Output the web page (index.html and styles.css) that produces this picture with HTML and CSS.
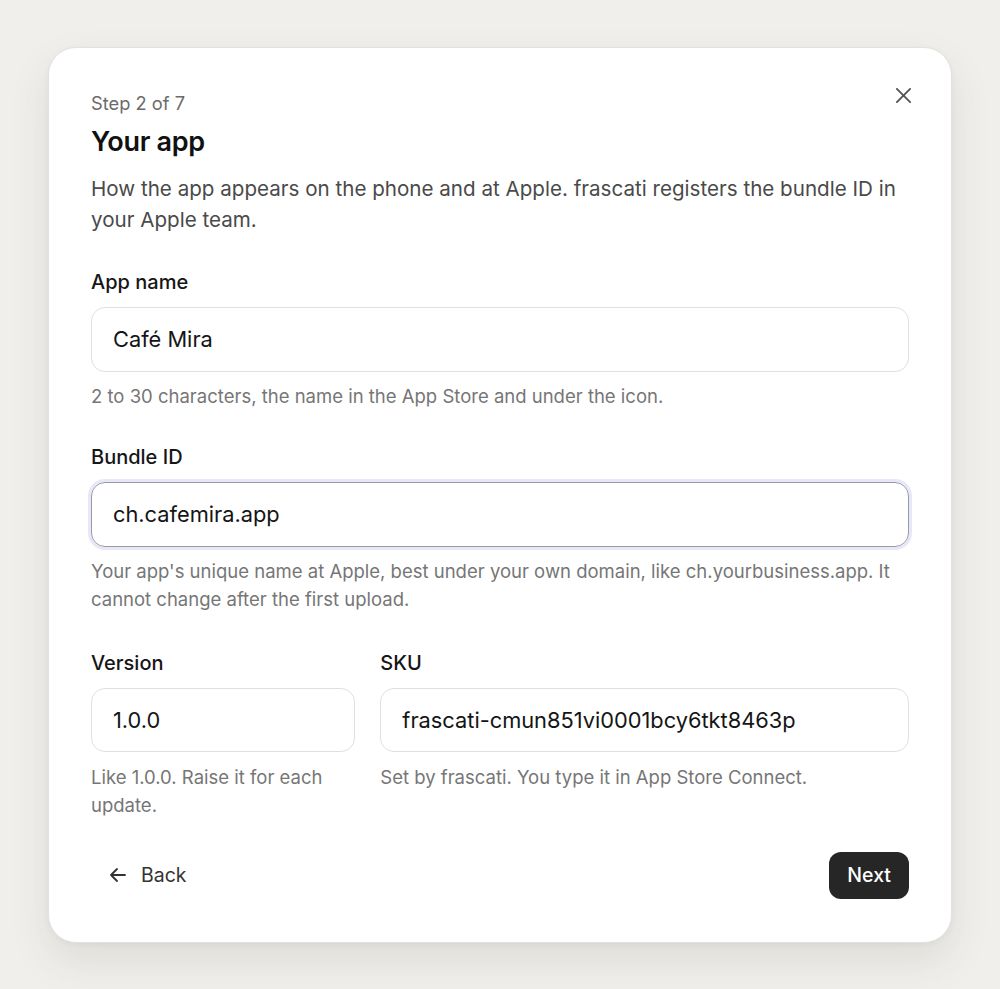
FILE: index.html
```html
<!DOCTYPE html>
<html lang="en">
<head>
<meta charset="utf-8">
<title>Your app</title>
<link rel="stylesheet" href="styles.css">
</head>
<body>
<div class="card">
  <button class="close" aria-label="Close">
    <svg width="18" height="18" viewBox="0 0 18 18" fill="none" stroke="#555" stroke-width="2" stroke-linecap="round"><path d="M2 2L16 16M16 2L2 16"/></svg>
  </button>
  <div class="step">Step 2 of 7</div>
  <h1 class="title">Your app</h1>
  <p class="desc">How the app appears on the phone and at Apple. frascati registers the bundle ID in your Apple team.</p>

  <div class="field">
    <label class="label">App name</label>
    <div class="input">Café Mira</div>
    <p class="hint">2 to 30 characters, the name in the App Store and under the icon.</p>
  </div>

  <div class="field">
    <label class="label">Bundle ID</label>
    <div class="input focused">ch.cafemira.app</div>
    <p class="hint">Your app's unique name at Apple, best under your own domain, like ch.yourbusiness.app. It cannot change after the first upload.</p>
  </div>

  <div class="row">
    <div class="field">
      <label class="label">Version</label>
      <div class="input">1.0.0</div>
      <p class="hint">Like 1.0.0. Raise it for each update.</p>
    </div>
    <div class="field">
      <label class="label">SKU</label>
      <div class="input">frascati-cmun851vi0001bcy6tkt8463p</div>
      <p class="hint">Set by frascati. You type it in App Store Connect.</p>
    </div>
  </div>

  <div class="actions">
    <button class="back">
      <svg width="18" height="16" viewBox="0 0 18 16" fill="none" stroke="#333" stroke-width="1.8" stroke-linecap="round" stroke-linejoin="round"><path d="M16 8H2M8 2L2 8l6 6"/></svg>
      <span>Back</span>
    </button>
    <button class="next">Next</button>
  </div>
</div>
</body>
</html>
```

FILE: styles.css
```css
* { box-sizing: border-box; }
html, body { margin: 0; padding: 0; }
body {
  background: #f0efec;
  font-family: "Inter", "Liberation Sans", sans-serif;
  min-height: 100vh;
  display: flex;
  align-items: center;
  justify-content: center;
  color: #111;
}
.card {
  position: relative;
  width: 904px;
  background: #fff;
  border: 1px solid #e2e1dd;
  border-radius: 28px;
  padding: 43px 42px 43px 42px;
  box-shadow: 0 18px 40px rgba(60, 55, 40, 0.10), 0 2px 6px rgba(0,0,0,0.04);
}
.close {
  position: absolute;
  top: 38px;
  right: 38px;
  width: 20px;
  height: 20px;
  padding: 0;
  border: none;
  background: none;
  display: flex;
  align-items: center;
  justify-content: center;
}
.close svg { width: 17px; height: 17px; }
.step {
  font-size: 18.3px;
  line-height: 24px;
  color: #6b6b6b;
}
.title {
  margin: 10px 0 0;
  font-size: 27px;
  line-height: 34px;
  font-weight: 600;
  letter-spacing: -0.3px;
  color: #111;
}
.desc {
  margin: 14px 0 0;
  font-size: 20.6px;
  line-height: 31px;
  color: #4a4a4a;
}
.field { margin-top: 34px; display: flex; flex-direction: column; }
.label {
  font-size: 20px;
  line-height: 26px;
  font-weight: 500;
  color: #161616;
  margin-bottom: 12px;
}
.input {
  height: 65px;
  border: 1.5px solid #e0e0e0;
  border-radius: 14px;
  padding: 0 21px;
  display: flex;
  align-items: center;
  font-size: 21.8px;
  color: #151515;
}
.input.focused {
  border-color: #9a9aa2;
  box-shadow: 0 0 0 3px #e7e7fa;
}
.hint {
  margin: 10px 0 0;
  font-size: 18.5px;
  line-height: 28px;
  color: #767676;
}
.row {
  display: grid;
  grid-template-columns: 1fr 2fr;
  column-gap: 25px;
}
.row .field { margin-top: 37px; }
.row .input { height: 64px; }
.row .hint { margin-top: 11px; }
.actions {
  margin-top: 33px;
  display: flex;
  justify-content: space-between;
  align-items: center;
}
.back {
  display: flex;
  align-items: center;
  gap: 14px;
  border: none;
  background: none;
  padding: 0 0 0 18px;
  font-family: inherit;
  font-size: 19.5px;
  color: #333;
  height: 47px;
}
.next {
  height: 47px;
  padding: 0 18px;
  border: none;
  border-radius: 12px;
  background: #262626;
  color: #fff;
  font-family: inherit;
  font-size: 19.5px;
  font-weight: 500;
}
```
